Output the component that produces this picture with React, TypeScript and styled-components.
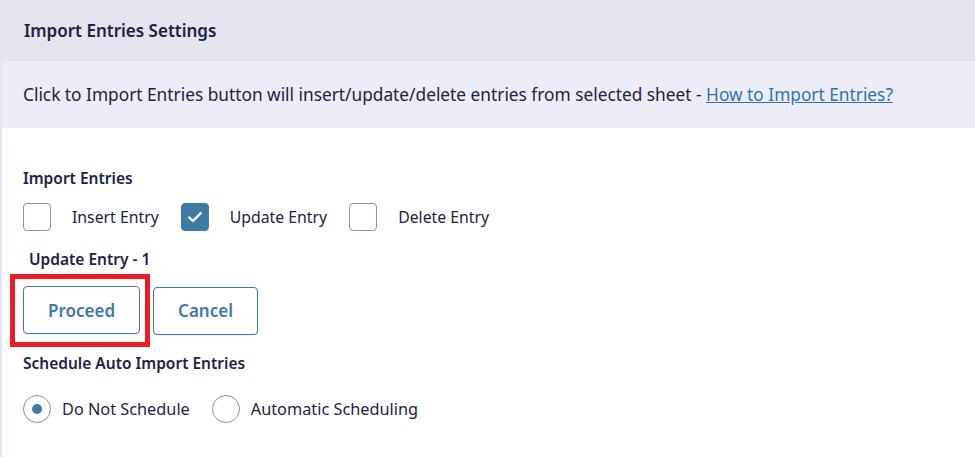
import React from "react";
import styled, { createGlobalStyle } from "styled-components";

const GlobalStyle = createGlobalStyle`
  html, body {
    margin: 0;
    padding: 0;
    background: #ffffff;
  }
  body {
    font-family: "Noto Sans", "Open Sans", sans-serif;
    color: #1d2340;
  }
`;

const App = (): JSX.Element => {
  return (
    <>
      <GlobalStyle />
      <Panel>
        <Header>
          <HeaderTitle>Import Entries Settings</HeaderTitle>
        </Header>
        <Notice>
          Click to Import Entries button will insert/update/delete entries from selected sheet -{" "}
          <Link href="#">How to Import Entries?</Link>
        </Notice>
        <Body>
          <Label>Import Entries</Label>
          <OptionRow>
            <Option>
              <Checkbox />
              <OptionText>Insert Entry</OptionText>
            </Option>
            <Option>
              <Checkbox checked>
                <svg width="20" height="20" viewBox="0 0 16 16" fill="none">
                  <path d="M3.4 8.4l2.9 2.8L12.6 4.9" stroke="#ffffff" strokeWidth="1.9" strokeLinecap="round" strokeLinejoin="round" />
                </svg>
              </Checkbox>
              <OptionText>Update Entry</OptionText>
            </Option>
            <Option>
              <Checkbox />
              <OptionText>Delete Entry</OptionText>
            </Option>
          </OptionRow>
          <SubLabel>Update Entry - 1</SubLabel>
          <ButtonRow>
            <Highlight>
              <Button>Proceed</Button>
            </Highlight>
            <Button>Cancel</Button>
          </ButtonRow>
          <Label>Schedule Auto Import Entries</Label>
          <RadioRow>
            <Option>
              <Radio checked />
              <RadioText>Do Not Schedule</RadioText>
            </Option>
            <Option>
              <Radio />
              <RadioText>Automatic Scheduling</RadioText>
            </Option>
          </RadioRow>
        </Body>
      </Panel>
    </>
  );
};

export default App;

const Panel = styled.div`
  width: 975px;
  height: 457px;
  border-left: 2px solid #e3e6ee;
  box-sizing: border-box;
  overflow: hidden;
  background: #ffffff;
`;

const Header = styled.div`
  height: 61px;
  background: #e3e6ef;
  display: flex;
  align-items: center;
  padding-left: 22px;
`;

const HeaderTitle = styled.h2`
  margin: 0;
  font-size: 17px;
  font-weight: 600;
  color: #1d2340;
`;

const Notice = styled.div`
  height: 67px;
  background: #ededf8;
  display: flex;
  align-items: center;
  padding-left: 21px;
  font-size: 17.3px;
  color: #1d2340;
  white-space: pre;
`;

const Link = styled.a`
  color: #2e73b5;
  text-decoration: underline;
`;

const Body = styled.div`
  padding: 40px 0 0 21px;
  display: flex;
  flex-direction: column;
`;

const Label = styled.div`
  font-size: 15.5px;
  font-weight: 600;
  color: #1d2340;
  line-height: 20px;
`;

const OptionRow = styled.div`
  display: flex;
  align-items: center;
  margin-top: 15px;
  gap: 22px;
`;

const RadioRow = styled(OptionRow)`
  margin-top: 22px;
`;

const Option = styled.label`
  display: flex;
  align-items: center;
`;

const Checkbox = styled.span<{ checked?: boolean }>`
  width: 28px;
  height: 28px;
  box-sizing: border-box;
  border-radius: 4px;
  border: 1px solid ${({ checked }) => (checked ? "#3e7aa6" : "#8c8fa8")};
  background: ${({ checked }) => (checked ? "#3e7aa6" : "#ffffff")};
  display: flex;
  align-items: center;
  justify-content: center;
`;

const OptionText = styled.span`
  margin-left: 21px;
  font-size: 15.8px;
  color: #1d2340;
`;

const RadioText = styled(OptionText)`
  margin-left: 11px;
  font-size: 16.3px;
`;

const Radio = styled.span<{ checked?: boolean }>`
  width: 28px;
  height: 28px;
  box-sizing: border-box;
  border-radius: 50%;
  border: 1px solid #8c8fa8;
  display: flex;
  align-items: center;
  justify-content: center;

  &::after {
    content: "";
    width: 10px;
    height: 10px;
    border-radius: 50%;
    background: ${({ checked }) => (checked ? "#3e7aa6" : "transparent")};
  }
`;

const SubLabel = styled(Label)`
  margin-top: 18px;
  margin-left: 6px;
`;

const ButtonRow = styled.div`
  display: flex;
  align-items: center;
  margin: 5px 0 6px -13px;
  gap: 3px;
`;

const Highlight = styled.div`
  border: 5px solid #ed1c24;
  padding: 7px 5px 8px 8px;
`;

const Button = styled.button`
  height: 48px;
  padding: 0 24px;
  background: #ffffff;
  border: 1px solid #3e7aa6;
  border-radius: 4px;
  color: #3e7aa6;
  font-family: inherit;
  font-size: 17px;
  font-weight: 600;
  cursor: pointer;
  box-shadow: 0 1px 2px rgba(0, 0, 0, 0.06);
`;
